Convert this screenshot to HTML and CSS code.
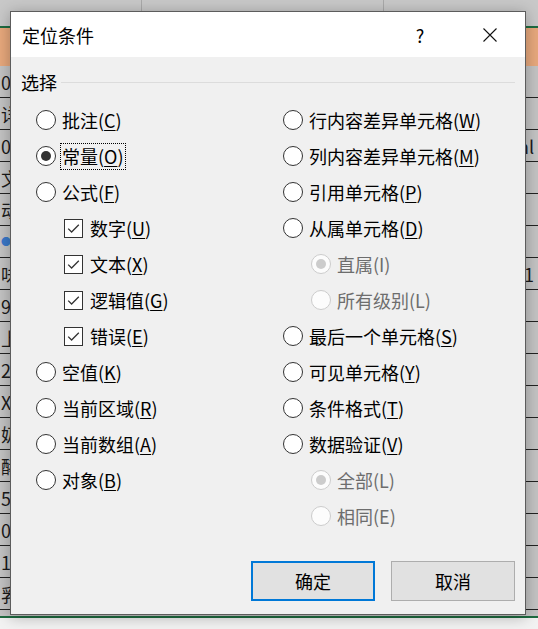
FILE: index.html
```html
<!DOCTYPE html>
<html lang="zh-CN">
<head>
<meta charset="utf-8">
<title>定位条件</title>
<link rel="stylesheet" href="styles.css">
</head>
<body>
<div class="sheet">
  <div class="sheet-top"><div class="top-cell c1"></div><div class="top-cell c2"></div><div class="top-cell c3"></div></div>
  <div class="sheet-green"></div>
  <div class="sheet-header"></div>
  <div class="sheet-rows">
    <div class="srow"><span class="lt">0</span><span class="rt"></span></div>
    <div class="srow"><span class="lt">详</span><span class="rt"></span></div>
    <div class="srow"><span class="lt">0</span><span class="rt">ml</span></div>
    <div class="srow"><span class="lt">文</span><span class="rt"></span></div>
    <div class="srow"><span class="lt">动</span><span class="rt"></span></div>
    <div class="srow"><span class="lt blue">●</span><span class="rt"></span></div>
    <div class="srow"><span class="lt">味</span><span class="rt">1</span></div>
    <div class="srow"><span class="lt">9</span><span class="rt"></span></div>
    <div class="srow"><span class="lt">上</span><span class="rt"></span></div>
    <div class="srow"><span class="lt">2</span><span class="rt"></span></div>
    <div class="srow"><span class="lt">X</span><span class="rt"></span></div>
    <div class="srow"><span class="lt">奶</span><span class="rt"></span></div>
    <div class="srow"><span class="lt">酵</span><span class="rt"></span></div>
    <div class="srow"><span class="lt">5</span><span class="rt"></span></div>
    <div class="srow"><span class="lt">0</span><span class="rt"></span></div>
    <div class="srow"><span class="lt">1</span><span class="rt"></span></div>
    <div class="srow"><span class="lt">乳</span><span class="rt"></span></div>
  </div>
  <div class="sheet-green bottom"></div>
  <div class="sheet-foot"></div>
</div>

<div class="dialog">
  <div class="titlebar">
    <span class="title">定位条件</span>
    <span class="help">?</span>
    <svg class="close" width="14" height="14" viewBox="0 0 14 14"><path d="M0.5 0.5L13.5 13.5M13.5 0.5L0.5 13.5" stroke="#111" stroke-width="1.1" fill="none"/></svg>
  </div>
  <div class="body">
    <div class="group-head"><span class="group-label">选择</span><span class="group-line"></span></div>
    <div class="options">
      <div class="col">
        <div class="opt"><span class="radio"></span><span class="lbl">批注(<u>C</u>)</span></div>
        <div class="opt"><span class="radio on"></span><span class="lbl focus">常量(<u>O</u>)</span></div>
        <div class="opt"><span class="radio"></span><span class="lbl">公式(<u>F</u>)</span></div>
        <div class="opt sub-check"><svg class="check" width="19" height="19" viewBox="0 0 19 19"><rect x="0.5" y="0.5" width="18" height="18" fill="#fff" stroke="#333"/><path d="M4.2 9.6L7.6 13L14.8 5.8" stroke="#333" stroke-width="1.3" fill="none"/></svg><span class="lbl">数字(<u>U</u>)</span></div>
        <div class="opt sub-check"><svg class="check" width="19" height="19" viewBox="0 0 19 19"><rect x="0.5" y="0.5" width="18" height="18" fill="#fff" stroke="#333"/><path d="M4.2 9.6L7.6 13L14.8 5.8" stroke="#333" stroke-width="1.3" fill="none"/></svg><span class="lbl">文本(<u>X</u>)</span></div>
        <div class="opt sub-check"><svg class="check" width="19" height="19" viewBox="0 0 19 19"><rect x="0.5" y="0.5" width="18" height="18" fill="#fff" stroke="#333"/><path d="M4.2 9.6L7.6 13L14.8 5.8" stroke="#333" stroke-width="1.3" fill="none"/></svg><span class="lbl">逻辑值(<u>G</u>)</span></div>
        <div class="opt sub-check"><svg class="check" width="19" height="19" viewBox="0 0 19 19"><rect x="0.5" y="0.5" width="18" height="18" fill="#fff" stroke="#333"/><path d="M4.2 9.6L7.6 13L14.8 5.8" stroke="#333" stroke-width="1.3" fill="none"/></svg><span class="lbl">错误(<u>E</u>)</span></div>
        <div class="opt"><span class="radio"></span><span class="lbl">空值(<u>K</u>)</span></div>
        <div class="opt"><span class="radio"></span><span class="lbl">当前区域(<u>R</u>)</span></div>
        <div class="opt"><span class="radio"></span><span class="lbl">当前数组(<u>A</u>)</span></div>
        <div class="opt"><span class="radio"></span><span class="lbl">对象(<u>B</u>)</span></div>
      </div>
      <div class="col">
        <div class="opt"><span class="radio"></span><span class="lbl">行内容差异单元格(<u>W</u>)</span></div>
        <div class="opt"><span class="radio"></span><span class="lbl">列内容差异单元格(<u>M</u>)</span></div>
        <div class="opt"><span class="radio"></span><span class="lbl">引用单元格(<u>P</u>)</span></div>
        <div class="opt"><span class="radio"></span><span class="lbl">从属单元格(<u>D</u>)</span></div>
        <div class="opt sub-radio disabled"><span class="radio on"></span><span class="lbl">直属(I)</span></div>
        <div class="opt sub-radio disabled"><span class="radio"></span><span class="lbl">所有级别(L)</span></div>
        <div class="opt"><span class="radio"></span><span class="lbl">最后一个单元格(<u>S</u>)</span></div>
        <div class="opt"><span class="radio"></span><span class="lbl">可见单元格(<u>Y</u>)</span></div>
        <div class="opt"><span class="radio"></span><span class="lbl">条件格式(<u>T</u>)</span></div>
        <div class="opt"><span class="radio"></span><span class="lbl">数据验证(<u>V</u>)</span></div>
        <div class="opt sub-radio disabled"><span class="radio on"></span><span class="lbl">全部(L)</span></div>
        <div class="opt sub-radio disabled"><span class="radio"></span><span class="lbl">相同(E)</span></div>
      </div>
    </div>
    <div class="footer">
      <button class="btn primary">确定</button>
      <button class="btn">取消</button>
    </div>
  </div>
</div>
</body>
</html>
```
FILE: styles.css
```css
html, body {
  margin: 0;
  padding: 0;
}
body {
  width: 538px;
  height: 629px;
  overflow: hidden;
  position: relative;
  font-family: "Noto Sans CJK SC", "Noto Sans", sans-serif;
  background: #f4f4f4;
}

/* dimmed spreadsheet behind the dialog */
.sheet {
  display: flex;
  flex-direction: column;
  height: 629px;
}
.sheet-top {
  display: flex;
  height: 26px;
  background: #c8c8c8;
}
.top-cell {
  height: 100%;
  box-sizing: border-box;
}
.top-cell.c1 { width: 142px; border-right: 1px solid #a9a9a9; }
.top-cell.c2 { width: 242px; border-right: 1px solid #a9a9a9; }
.top-cell.c3 { flex: 1; }
.sheet-green {
  height: 2px;
  background: #1d6b40;
}
.sheet-header {
  height: 38px;
  background: #e7a87c;
}
.sheet-rows {
  flex: 1;
  background: #c3c3c3;
  overflow: hidden;
}
.srow {
  height: 32px;
  box-sizing: border-box;
  border-bottom: 1px solid #222;
  display: flex;
  align-items: center;
  justify-content: space-between;
  font-size: 18px;
  color: #1a1a1a;
  line-height: 1;
}
.lt {
  padding-left: 1px;
}
.lt.blue {
  color: #3a78c8;
  font-size: 10px;
}
.rt {
  padding-right: 4px;
}
.sheet-green.bottom {
  height: 2px;
  background: #1e6b40;
}
.sheet-foot {
  height: 11px;
  background: #f2f2f2;
}

/* dialog */
.dialog {
  position: absolute;
  left: 10px;
  top: 11px;
  width: 516px;
  height: 604px;
  box-sizing: border-box;
  border: 1px solid #5c5c5c;
  background: #f0f0f0;
  box-shadow: 0 2px 14px rgba(0, 0, 0, 0.28);
  display: flex;
  flex-direction: column;
}
.titlebar {
  height: 45px;
  background: #fff;
  display: flex;
  align-items: center;
  padding: 0 28px 0 11px;
  font-size: 18px;
  color: #000;
}
.title {
  flex: 1;
}
.help {
  width: 20px;
  text-align: center;
  margin-right: 53px;
}
.close {
  display: block;
}

.body {
  flex: 1;
  display: flex;
  flex-direction: column;
  padding: 13px 0 0 0;
}
.group-head {
  display: flex;
  align-items: center;
  height: 24px;
  padding: 0 10px 0 10px;
  font-size: 18px;
}
.group-label {
  color: #000;
}
.group-line {
  flex: 1;
  margin-left: 4px;
  border-top: 1px solid #dcdcdc;
}
.options {
  display: grid;
  grid-template-columns: 247px 1fr;
  margin: 8px 0 0 25px;
}
.col {
  display: flex;
  flex-direction: column;
}
.opt {
  height: 36px;
  display: flex;
  align-items: center;
  gap: 6px;
  font-size: 18px;
  color: #000;
  white-space: nowrap;
}
.lbl {
  line-height: 25px;
}
.lbl u {
  text-decoration-thickness: 1px;
  text-underline-offset: 2px;
}
.lbl.focus {
  border: 1px dotted #000;
  padding: 0 1px;
  margin-left: -2px;
}
.radio {
  width: 20px;
  height: 20px;
  box-sizing: border-box;
  border: 1px solid #333;
  border-radius: 50%;
  background: #fff;
  display: flex;
  align-items: center;
  justify-content: center;
  flex: none;
}
.radio.on::after {
  content: "";
  width: 10px;
  height: 10px;
  border-radius: 50%;
  background: #333;
}
.sub-check {
  padding-left: 28px;
  gap: 7px;
}
.check {
  display: block;
  flex: none;
}
.sub-radio {
  padding-left: 28px;
}
.disabled {
  color: #6d6d6d;
}
.disabled .radio {
  border-color: #cccccc;
  background: #fcfcfc;
}
.disabled .radio.on::after {
  background: #cccccc;
}

.footer {
  display: flex;
  justify-content: flex-end;
  gap: 16px;
  margin-top: 27px;
  padding-right: 10px;
}
.btn {
  width: 124px;
  height: 40px;
  box-sizing: border-box;
  background: #e1e1e1;
  border: 1px solid #adadad;
  font-family: "Noto Sans CJK SC", "Noto Sans", sans-serif;
  font-size: 18px;
  color: #000;
  padding: 0;
}
.btn.primary {
  border: 2px solid #0078d7;
}
```
